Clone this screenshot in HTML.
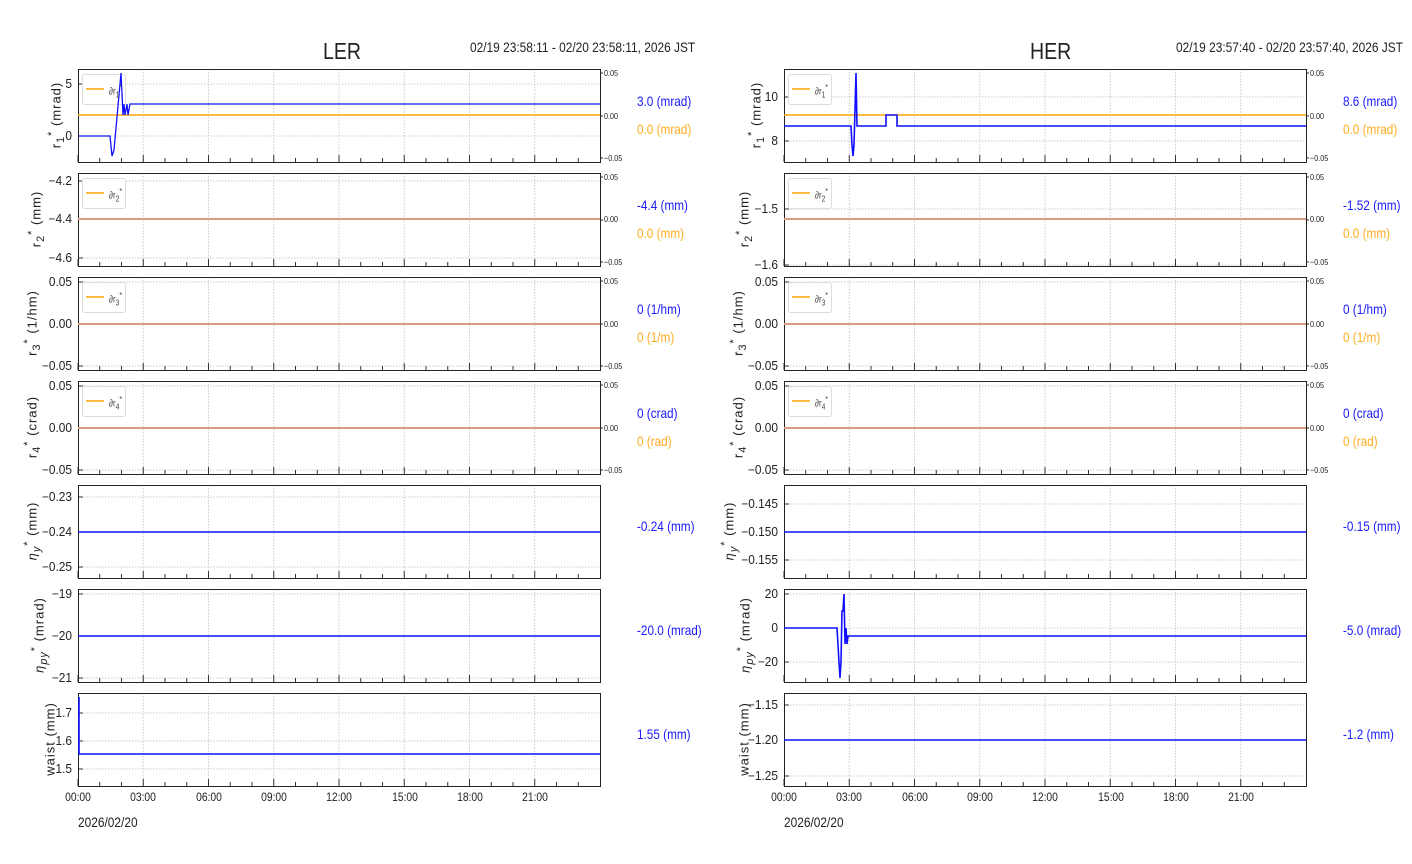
<!DOCTYPE html>
<html><head><meta charset="utf-8"><style>
body{margin:0;background:#fff;width:1412px;height:864px;position:relative;overflow:hidden;font-family:"Liberation Sans Narrow","Liberation Sans",sans-serif;}
.t{position:absolute;white-space:nowrap;line-height:1;color:#222}
.tk{font-size:12.5px;transform:scaleX(.95);transform-origin:right center;text-align:right;width:60px}
.rt{font-size:8.5px;transform:scaleX(.85);transform-origin:left center}
.xt{font-size:12px;transform:translateX(-50%) scaleX(.86)}
.val{font-size:14px;transform:scaleX(.84);transform-origin:left center}
.yl{font-size:13px;transform:translate(-50%,-50%) rotate(-90deg);letter-spacing:1px}
.lg{font-size:10px;transform:scaleX(.8);transform-origin:left center;color:#444}
svg{position:absolute;left:0;top:0}
</style></head><body>
<svg id="s" width="1412" height="864"></svg>

<div class="t" style="left:323px;top:40px;font-size:23px;transform:scaleX(.85);transform-origin:left">LER</div>
<div class="t" style="left:1030px;top:40px;font-size:23px;transform:scaleX(.85);transform-origin:left">HER</div>
<div class="t" style="left:470px;top:40px;font-size:14px;transform:scaleX(.85);transform-origin:left">02/19 23:58:11 - 02/20 23:58:11, 2026 JST</div>
<div class="t" style="left:1176px;top:40px;font-size:14px;transform:scaleX(.85);transform-origin:left">02/19 23:57:40 - 02/20 23:57:40, 2026 JST</div>

<!-- LER y ticks -->
<div class="t tk" style="left:12px;top:78px">5</div><div class="t tk" style="left:12px;top:130px">0</div>
<div class="t tk" style="left:12px;top:175px">−4.2</div><div class="t tk" style="left:12px;top:213px">−4.4</div><div class="t tk" style="left:12px;top:252px">−4.6</div>
<div class="t tk" style="left:12px;top:276px">0.05</div><div class="t tk" style="left:12px;top:318px">0.00</div><div class="t tk" style="left:12px;top:360px">−0.05</div>
<div class="t tk" style="left:12px;top:380px">0.05</div><div class="t tk" style="left:12px;top:422px">0.00</div><div class="t tk" style="left:12px;top:464px">−0.05</div>
<div class="t tk" style="left:12px;top:491px">−0.23</div><div class="t tk" style="left:12px;top:526px">−0.24</div><div class="t tk" style="left:12px;top:561px">−0.25</div>
<div class="t tk" style="left:12px;top:588px">−19</div><div class="t tk" style="left:12px;top:630px">−20</div><div class="t tk" style="left:12px;top:672px">−21</div>
<div class="t tk" style="left:12px;top:707px">1.7</div><div class="t tk" style="left:12px;top:735px">1.6</div><div class="t tk" style="left:12px;top:763px">1.5</div>
<!-- HER y ticks -->
<div class="t tk" style="left:718px;top:91px">10</div><div class="t tk" style="left:718px;top:135px">8</div>
<div class="t tk" style="left:718px;top:203px">−1.5</div><div class="t tk" style="left:718px;top:259px">−1.6</div>
<div class="t tk" style="left:718px;top:276px">0.05</div><div class="t tk" style="left:718px;top:318px">0.00</div><div class="t tk" style="left:718px;top:360px">−0.05</div>
<div class="t tk" style="left:718px;top:380px">0.05</div><div class="t tk" style="left:718px;top:422px">0.00</div><div class="t tk" style="left:718px;top:464px">−0.05</div>
<div class="t tk" style="left:718px;top:498px">−0.145</div><div class="t tk" style="left:718px;top:526px">−0.150</div><div class="t tk" style="left:718px;top:554px">−0.155</div>
<div class="t tk" style="left:718px;top:588px">20</div><div class="t tk" style="left:718px;top:622px">0</div><div class="t tk" style="left:718px;top:656px">−20</div>
<div class="t tk" style="left:718px;top:699px">−1.15</div><div class="t tk" style="left:718px;top:734px">−1.20</div><div class="t tk" style="left:718px;top:770px">−1.25</div>

<!-- right twin ticks -->
<div class="t rt" style="left:604px;top:69px">0.05</div><div class="t rt" style="left:604px;top:112px">0.00</div><div class="t rt" style="left:604px;top:154px">−0.05</div>
<div class="t rt" style="left:604px;top:173px">0.05</div><div class="t rt" style="left:604px;top:215px">0.00</div><div class="t rt" style="left:604px;top:258px">−0.05</div>
<div class="t rt" style="left:604px;top:277px">0.05</div><div class="t rt" style="left:604px;top:320px">0.00</div><div class="t rt" style="left:604px;top:362px">−0.05</div>
<div class="t rt" style="left:604px;top:381px">0.05</div><div class="t rt" style="left:604px;top:424px">0.00</div><div class="t rt" style="left:604px;top:466px">−0.05</div>
<div class="t rt" style="left:1310px;top:69px">0.05</div><div class="t rt" style="left:1310px;top:112px">0.00</div><div class="t rt" style="left:1310px;top:154px">−0.05</div>
<div class="t rt" style="left:1310px;top:173px">0.05</div><div class="t rt" style="left:1310px;top:215px">0.00</div><div class="t rt" style="left:1310px;top:258px">−0.05</div>
<div class="t rt" style="left:1310px;top:277px">0.05</div><div class="t rt" style="left:1310px;top:320px">0.00</div><div class="t rt" style="left:1310px;top:362px">−0.05</div>
<div class="t rt" style="left:1310px;top:381px">0.05</div><div class="t rt" style="left:1310px;top:424px">0.00</div><div class="t rt" style="left:1310px;top:466px">−0.05</div>

<!-- values -->
<div class="t val" style="left:637px;top:94px;color:#1a1aff">3.0 (mrad)</div><div class="t val" style="left:637px;top:122px;color:#ffad20">0.0 (mrad)</div>
<div class="t val" style="left:637px;top:198px;color:#1a1aff">-4.4 (mm)</div><div class="t val" style="left:637px;top:226px;color:#ffad20">0.0 (mm)</div>
<div class="t val" style="left:637px;top:302px;color:#1a1aff">0 (1/hm)</div><div class="t val" style="left:637px;top:330px;color:#ffad20">0 (1/m)</div>
<div class="t val" style="left:637px;top:406px;color:#1a1aff">0 (crad)</div><div class="t val" style="left:637px;top:434px;color:#ffad20">0 (rad)</div>
<div class="t val" style="left:637px;top:519px;color:#1a1aff">-0.24 (mm)</div>
<div class="t val" style="left:637px;top:623px;color:#1a1aff">-20.0 (mrad)</div>
<div class="t val" style="left:637px;top:727px;color:#1a1aff">1.55 (mm)</div>
<div class="t val" style="left:1343px;top:94px;color:#1a1aff">8.6 (mrad)</div><div class="t val" style="left:1343px;top:122px;color:#ffad20">0.0 (mrad)</div>
<div class="t val" style="left:1343px;top:198px;color:#1a1aff">-1.52 (mm)</div><div class="t val" style="left:1343px;top:226px;color:#ffad20">0.0 (mm)</div>
<div class="t val" style="left:1343px;top:302px;color:#1a1aff">0 (1/hm)</div><div class="t val" style="left:1343px;top:330px;color:#ffad20">0 (1/m)</div>
<div class="t val" style="left:1343px;top:406px;color:#1a1aff">0 (crad)</div><div class="t val" style="left:1343px;top:434px;color:#ffad20">0 (rad)</div>
<div class="t val" style="left:1343px;top:519px;color:#1a1aff">-0.15 (mm)</div>
<div class="t val" style="left:1343px;top:623px;color:#1a1aff">-5.0 (mrad)</div>
<div class="t val" style="left:1343px;top:727px;color:#1a1aff">-1.2 (mm)</div>

<!-- y labels -->
<div class="t yl" style="left:57px;top:115px">r<sub>1</sub><sup>*</sup> (mrad)</div>
<div class="t yl" style="left:37px;top:219px">r<sub>2</sub><sup>*</sup> (mm)</div>
<div class="t yl" style="left:33px;top:323px">r<sub>3</sub><sup>*</sup> (1/hm)</div>
<div class="t yl" style="left:33px;top:427px">r<sub>4</sub><sup>*</sup> (crad)</div>
<div class="t yl" style="left:33px;top:531px"><i>η</i><sub><i>y</i></sub><sup>*</sup> (mm)</div>
<div class="t yl" style="left:40px;top:635px"><i>η</i><sub><i>py</i></sub><sup>*</sup> (mrad)</div>
<div class="t yl" style="left:50px;top:739px">waist (mm)</div>
<div class="t yl" style="left:757px;top:115px">r<sub>1</sub><sup>*</sup> (mrad)</div>
<div class="t yl" style="left:745px;top:219px">r<sub>2</sub><sup>*</sup> (mm)</div>
<div class="t yl" style="left:739px;top:323px">r<sub>3</sub><sup>*</sup> (1/hm)</div>
<div class="t yl" style="left:739px;top:427px">r<sub>4</sub><sup>*</sup> (crad)</div>
<div class="t yl" style="left:730px;top:531px"><i>η</i><sub><i>y</i></sub><sup>*</sup> (mm)</div>
<div class="t yl" style="left:746px;top:635px"><i>η</i><sub><i>py</i></sub><sup>*</sup> (mrad)</div>
<div class="t yl" style="left:744px;top:739px">waist (mm)</div>

<!-- legends -->
<div class="t lg" style="left:109px;top:83px">∂r<sub>1</sub><sup>*</sup></div>
<div class="t lg" style="left:109px;top:187px">∂r<sub>2</sub><sup>*</sup></div>
<div class="t lg" style="left:109px;top:291px">∂r<sub>3</sub><sup>*</sup></div>
<div class="t lg" style="left:109px;top:395px">∂r<sub>4</sub><sup>*</sup></div>
<div class="t lg" style="left:815px;top:83px">∂r<sub>1</sub><sup>*</sup></div>
<div class="t lg" style="left:815px;top:187px">∂r<sub>2</sub><sup>*</sup></div>
<div class="t lg" style="left:815px;top:291px">∂r<sub>3</sub><sup>*</sup></div>
<div class="t lg" style="left:815px;top:395px">∂r<sub>4</sub><sup>*</sup></div>

<!-- x labels -->
<div class="t xt" style="left:78px;top:791px">00:00</div><div class="t xt" style="left:143px;top:791px">03:00</div><div class="t xt" style="left:209px;top:791px">06:00</div><div class="t xt" style="left:274px;top:791px">09:00</div><div class="t xt" style="left:339px;top:791px">12:00</div><div class="t xt" style="left:405px;top:791px">15:00</div><div class="t xt" style="left:470px;top:791px">18:00</div><div class="t xt" style="left:535px;top:791px">21:00</div>
<div class="t xt" style="left:784px;top:791px">00:00</div><div class="t xt" style="left:849px;top:791px">03:00</div><div class="t xt" style="left:915px;top:791px">06:00</div><div class="t xt" style="left:980px;top:791px">09:00</div><div class="t xt" style="left:1045px;top:791px">12:00</div><div class="t xt" style="left:1111px;top:791px">15:00</div><div class="t xt" style="left:1176px;top:791px">18:00</div><div class="t xt" style="left:1241px;top:791px">21:00</div>
<div class="t" style="left:78px;top:815px;font-size:14px;transform:scaleX(.85);transform-origin:left">2026/02/20</div>
<div class="t" style="left:784px;top:815px;font-size:14px;transform:scaleX(.85);transform-origin:left">2026/02/20</div>

<script>
var s='';
var Y=[69,173,277,381,485,589,693];
var hg={L:[[84,136],[181,219,258],[282,324,366],[386,428,470],[497,532,567],[594,636,678],[713,741,769]],
        H:[[97,141],[209,265],[282,324,366],[386,428,470],[504,532,560],[594,628,662],[705,740,776]]};
[['L',78],['H',784]].forEach(function(sd){
 var x0=sd[1],x1=x0+522;
 Y.forEach(function(y,i){
  var y1=y+93;
  for(var h=3;h<24;h+=3){var x=x0+h*522/24;s+='<line x1="'+x+'" y1="'+y+'" x2="'+x+'" y2="'+y1+'" stroke="#ccc" stroke-dasharray="1.5,1.5" stroke-width="1"/>';}
  hg[sd[0]][i].forEach(function(g){s+='<line x1="'+x0+'" y1="'+g+'" x2="'+x1+'" y2="'+g+'" stroke="#ccc" stroke-dasharray="1.5,1.5"/>';s+='<line x1="'+x0+'" y1="'+g+'" x2="'+(x0+5)+'" y2="'+g+'" stroke="#333"/>';});
  for(var h=0;h<24;h++){var x=x0+h*522/24;var L=(h%3==0)?7:4;s+='<line x1="'+x+'" y1="'+(y1-L)+'" x2="'+x+'" y2="'+y1+'" stroke="#333"/>';}
  if(i<4){[4,47,89].forEach(function(d){s+='<line x1="'+x1+'" y1="'+(y+d)+'" x2="'+(x1+3)+'" y2="'+(y+d)+'" stroke="#333"/>';});}
  s+='<rect x="'+x0+'.5" y="'+y+'.5" width="522" height="93" fill="none" stroke="#222" stroke-width="1"/>';
  if(i<4){s+='<rect x="'+(x0+4.5)+'" y="'+(y+5.5)+'" width="43" height="30" rx="2" fill="#fff" fill-opacity=".85" stroke="#ddd"/>';
   s+='<line x1="'+(x0+8)+'" y1="'+(y+20)+'" x2="'+(x0+26)+'" y2="'+(y+20)+'" stroke="#ffa500" stroke-width="1.5"/>';}
 });
});
function pl(p,c,w){s+='<polyline points="'+p+'" fill="none" stroke="'+c+'" stroke-width="'+(w||1.6)+'"/>';}
// LER
pl('78,115 600,115','#ffa500',1.5);
pl('79,136 110,136 112,156 114,150 121,73 123,115 124,104 125,115 127,104 128,115 130,104 600,104','#1010ff',1.3);
[219,324,428].forEach(function(y){pl('78,'+y+' 600,'+y,'#d89a80',2);});
pl('78,532 600,532','#1010ff');pl('78,636 600,636','#1010ff');
pl('79,697 79,754 600,754','#1010ff');
// HER
pl('784,115 1306,115','#ffa500',1.5);
pl('784,126 851,126 852,145 853,156 854,145 855,110 856,73 857,126 858,126 886,126 886,115 897,115 897,126 1306,126','#1010ff');
[219,324,428].forEach(function(y){pl('784,'+y+' 1306,'+y,'#d89a80',2);});
pl('784,532 1306,532','#1010ff');
pl('784,628 837,628 838,645 839,662 840,678 841,662 842,611 843,611 844,594 845,644 846,628 847,644 848,636 1306,636','#1010ff');
pl('784,740 1306,740','#1010ff');
document.getElementById('s').innerHTML=s;
</script>
</body></html>
